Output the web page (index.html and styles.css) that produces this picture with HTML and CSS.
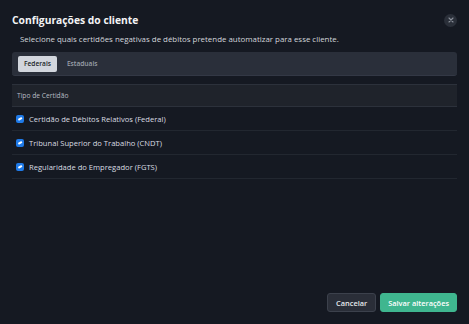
FILE: index.html
```html
<!doctype html>
<html lang="pt-BR">
<head>
<meta charset="utf-8">
<title>Configurações do cliente</title>
<link rel="stylesheet" href="styles.css">
</head>
<body>
<div class="dialog">
	<div class="dialog-head">
		<h2 class="dialog-title">Configurações do cliente</h2>
		<span class="close-btn">
			<svg width="6" height="6" viewBox="0 0 6 6"><path d="M1 1L5 5M5 1L1 5" stroke="#8b909b" stroke-width="1.1" stroke-linecap="round"/></svg>
		</span>
	</div>
	<p class="dialog-desc">Selecione quais certidões negativas de débitos pretende automatizar para esse cliente.</p>

	<div class="tabs">
		<span class="tab tab-on">Federais</span>
		<span class="tab">Estaduais</span>
	</div>

	<table class="cert-table" cellpadding="0" cellspacing="0">
	<tr>
		<th>Tipo de Certidão</th>
	</tr>
	<tr>
		<td><span class="check"></span>Certidão de Débitos Relativos (Federal)</td>
	</tr>
	<tr>
		<td><span class="check"></span>Tribunal Superior do Trabalho (CNDT)</td>
	</tr>
	<tr>
		<td><span class="check"></span>Regularidade do Empregador (FGTS)</td>
	</tr>
	</table>

	<div class="dialog-foot">
		<button class="btn btn-cancel">Cancelar</button>
		<button class="btn btn-save">Salvar alterações</button>
	</div>
</div>
</body>
</html>
```

FILE: styles.css
```css
html, body
{
	margin:0px;
	padding:0px;
	height:100%;
	background:#151922;
}
body
{
	font-family:"Open Sans", "DejaVu Sans", sans-serif;
	color:#d6d9de;
}
.dialog
{
	height:100%;
	box-sizing:border-box;
	padding:12px 12px 12px 12px;
	display:flex;
	flex-direction:column;
}
.dialog-head
{
	display:flex;
	justify-content:space-between;
	align-items:center;
	height:16px;
}
.dialog-title
{
	margin:0px;
	font-size:10.3px;
	font-weight:700;
	color:#f2f3f5;
}
.close-btn
{
	width:13px;
	height:13px;
	border-radius:50%;
	background:#2a2f39;
	display:flex;
	align-items:center;
	justify-content:center;
}
.dialog-desc
{
	margin:5px 0px 0px 8px;
	font-size:7.9px;
	line-height:12px;
	color:#d3d6db;
}
.tabs
{
	margin-top:7px;
	height:24px;
	box-sizing:border-box;
	padding:4px 6px;
	background:#2a2f3a;
	border-radius:3px;
	border-bottom:1px #333845 solid;
	display:flex;
	align-items:center;
	gap:4px;
}
.tab
{
	font-size:6.6px;
	font-weight:600;
	color:#9ca1ab;
	padding:0px 6px;
	height:16px;
	line-height:16px;
	border-radius:2px;
}
.tab-on
{
	background:#d2d6dd;
	color:#1a1e26;
}
.cert-table
{
	margin-top:8px;
	width:100%;
	border-collapse:collapse;
}
.cert-table th
{
	text-align:left;
	font-size:6.7px;
	font-weight:500;
	color:#b7bbc3;
	height:21px;
	padding:0px 5px;
	background:#1f232b;
	border-top:1px #2c313b solid;
	border-bottom:1px #2c313b solid;
}
.cert-table td
{
	font-size:7.6px;
	font-weight:500;
	color:#d9dce1;
	height:23px;
	padding:0px 4px;
	border-bottom:1px #222730 solid;
}
.check
{
	display:inline-block;
	width:8px;
	height:8px;
	margin-right:5px;
	vertical-align:-1px;
	border-radius:2px;
	background:#1f7ae8;
	position:relative;
}
.check:after
{
	content:"";
	position:absolute;
	left:2px;
	top:3px;
	width:4px;
	height:1.5px;
	background:#ffffff;
	transform:rotate(-30deg);
}
.dialog-foot
{
	margin-top:auto;
	display:flex;
	justify-content:flex-end;
	gap:4px;
}
.btn
{
	font-family:"Open Sans", "DejaVu Sans", sans-serif;
	font-size:7.4px;
	font-weight:600;
	height:19px;
	padding:0px 8px;
	border-radius:3px;
	cursor:pointer;
}
.btn-cancel
{
	background:#2a2e38;
	border:1px #3c414c solid;
	color:#e6e8eb;
}
.btn-save
{
	background:#3fb68f;
	border:1px #3fb68f solid;
	color:#ffffff;
	padding:0px 7px;
}
```
